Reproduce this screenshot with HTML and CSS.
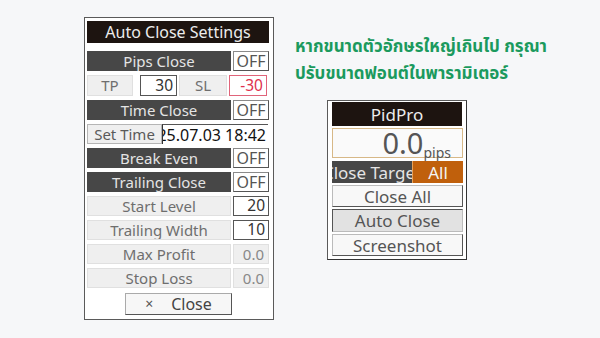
FILE: index.html
```html
<!DOCTYPE html>
<html>
<head>
<meta charset="utf-8">
<link rel="stylesheet" href="styles.css">
</head>
<body>
<div class="stage">
  <div class="panel settings">
    <div class="title">Auto Close Settings</div>
    <div class="rows">
      <div class="row split">
        <div class="bar">Pips Close</div>
        <div class="btn">OFF</div>
      </div>
      <div class="row tpsl">
        <div class="lbl">TP</div>
        <div class="inp">30</div>
        <div class="lbl">SL</div>
        <div class="inp red">-30</div>
      </div>
      <div class="row split">
        <div class="bar">Time Close</div>
        <div class="btn">OFF</div>
      </div>
      <div class="row timerow">
        <div class="lbl dark-lbl">Set Time</div>
        <div class="inp time"><span>25.07.03 18:42</span></div>
      </div>
      <div class="row split">
        <div class="bar">Break Even</div>
        <div class="btn">OFF</div>
      </div>
      <div class="row split">
        <div class="bar">Trailing Close</div>
        <div class="btn">OFF</div>
      </div>
      <div class="row split">
        <div class="lbl">Start Level</div>
        <div class="inp">20</div>
      </div>
      <div class="row split">
        <div class="lbl">Trailing Width</div>
        <div class="inp">10</div>
      </div>
      <div class="row split">
        <div class="lbl">Max Profit</div>
        <div class="val">0.0</div>
      </div>
      <div class="row split">
        <div class="lbl">Stop Loss</div>
        <div class="val">0.0</div>
      </div>
      <div class="closebar">
        <div class="closebtn"><span class="x">×</span><span>Close</span></div>
      </div>
    </div>
  </div>

  <div class="right">
    <p class="note">หากขนาดตัวอักษรใหญ่เกินไป กรุณา<br>ปรับขนาดฟอนต์ในพารามิเตอร์</p>
    <div class="panel pid">
      <div class="title small">PidPro</div>
      <div class="pips"><span class="big">0.0</span><span class="unit">pips</span></div>
      <div class="target">
        <div class="tlabel"><span>Close Target</span></div>
        <div class="all">All</div>
      </div>
      <div class="pbtn">Close All</div>
      <div class="pbtn pressed">Auto Close</div>
      <div class="pbtn">Screenshot</div>
    </div>
  </div>
</div>
</body>
</html>
```

FILE: styles.css
```css
* { box-sizing: border-box; }
html, body {
  margin: 0;
  padding: 0;
  background: #f6f7f9;
}
body {
  width: 600px;
  height: 338px;
  overflow: hidden;
  font-family: "Noto Sans", "Open Sans", sans-serif;
  font-size: 15px;
}
.stage {
  display: flex;
  align-items: flex-start;
  padding: 17px 0 0 84px;
}
.panel {
  background: #ffffff;
  border: 1px solid #5a5a5a;
}
.settings {
  width: 190px;
  height: 303px;
  padding: 3px 4px 0 2px;
}
.title {
  height: 22px;
  background: #1d1410;
  color: #ececec;
  display: flex;
  align-items: center;
  justify-content: center;
  font-size: 16px;
  line-height: 1;
}
.rows {
  margin-top: 8px;
  display: flex;
  flex-direction: column;
  gap: 4px;
}
.row {
  height: 20px;
  display: grid;
  line-height: 1;
}
.row > div {
  display: flex;
  align-items: center;
  overflow: hidden;
  white-space: nowrap;
}
.split {
  grid-template-columns: 144px 36px;
  gap: 2px;
}
.tpsl {
  height: 21px;
  grid-template-columns: 46px 44px 52px 38px;
}
.tpsl .inp:nth-child(2) { margin-left: 7px; }
.tpsl .lbl:nth-child(3) { margin: 0 2px; }
.timerow {
  grid-template-columns: 75px 106px;
}
.bar {
  background: #474747;
  color: #e4e4e4;
  justify-content: center;
}
.btn {
  background: #ffffff;
  border: 1px solid #8a8a8a;
  border-right-color: #555;
  border-bottom-color: #555;
  color: #555;
  justify-content: center;
  font-size: 16px;
}
.lbl {
  background: #efefef;
  border: 1px solid #e0e0e0;
  color: #6e6e6e;
  justify-content: center;
}
.dark-lbl {
  border-color: #b5b5b5;
  color: #5a5a5a;
}
.inp {
  background: #ffffff;
  border: 1px solid #555;
  color: #333;
  justify-content: flex-end;
  padding-right: 3px;
  font-size: 15.5px;
}
.inp.red {
  border-color: #e0647a;
  color: #e0304e;
}
.inp.time {
  border: none;
  border-top: 1px solid #555;
  border-left: 1px solid #333;
  color: #111;
  padding-right: 2px;
  font-size: 16px;
}
.val {
  background: #efefef;
  border: 1px solid #e0e0e0;
  color: #888;
  justify-content: flex-end;
  padding-right: 4px;
}
.closebar {
  display: flex;
  padding-left: 38px;
  margin-top: 1px;
}
.closebtn {
  width: 107px;
  height: 22px;
  background: #f7f7f7;
  border: 1px solid #aaa;
  border-right-color: #555;
  border-bottom-color: #555;
  color: #444;
  display: flex;
  align-items: center;
  justify-content: center;
  gap: 18px;
  line-height: 1;
  font-size: 16px;
}
.closebtn .x { font-size: 14px; color: #555; }

.right {
  margin-left: 21px;
  padding-top: 17px;
}
.note {
  margin: 0;
  font-family: "Noto Sans Thai", "Noto Sans", sans-serif;
  font-weight: 700;
  font-size: 17px;
  line-height: 27px;
  color: #1b9a5e;
  white-space: nowrap;
}
.pid {
  margin-left: 32px;
  margin-top: 12px;
  width: 140px;
  height: 160px;
  padding: 1px 3px 0 4px;
  border-right-color: #333;
  border-bottom-color: #333;
}
.title.small {
  height: 24px;
  width: 130px;
  font-size: 17px;
}
.pips {
  margin-top: 2px;
  width: 131px;
  height: 30px;
  border: 1px solid #d7b887;
  background: #fafafa;
  display: flex;
  align-items: flex-end;
  justify-content: flex-end;
  padding-right: 11px;
  color: #555;
  line-height: 1;
}
.pips .big {
  font-size: 29px;
}
.pips .unit {
  font-size: 14px;
  margin-bottom: -3px;
}
.target {
  margin-top: 3px;
  width: 131px;
  height: 22px;
  display: grid;
  grid-template-columns: 80px 51px;
  line-height: 1;
}
.tlabel {
  background: #474747;
  color: #e4e4e4;
  display: flex;
  align-items: center;
  justify-content: center;
  overflow: hidden;
  white-space: nowrap;
  font-size: 17px;
}
.all {
  background: #c0600c;
  color: #f4f4f4;
  display: flex;
  align-items: center;
  justify-content: center;
  font-size: 17px;
  border-left: 1px solid #e7a25a;
}
.pbtn {
  margin-top: 2px;
  width: 131px;
  height: 22px;
  background: #f8f8f8;
  border: 1px solid #bbb;
  border-right-color: #555;
  border-bottom-color: #555;
  color: #555;
  display: flex;
  align-items: center;
  justify-content: center;
  line-height: 1;
  font-size: 17px;
}
.pbtn.pressed {
  background: #e2e2e2;
  border-color: #555;
  border-right-color: #bbb;
  border-bottom-color: #bbb;
  height: 23px;
}
```
